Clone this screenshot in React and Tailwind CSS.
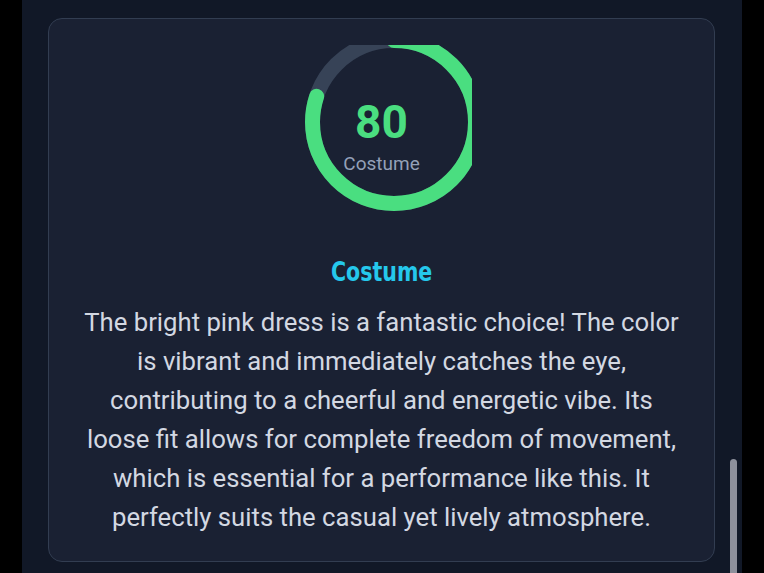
import React from 'react'

const score = 80

function ScoreRing({ value, label }) {
  const r = 81.5
  const circ = 2 * Math.PI * r
  const offset = circ * (1 - value / 100)

  return (
    <div className="relative w-[180px] h-[180px] overflow-hidden flex flex-col items-center justify-center pt-[4px]">
      <svg
        className="absolute inset-0"
        width="180"
        height="180"
        viewBox="0 0 180 180"
      >
        <circle cx="102" cy="77" r={r} fill="none" stroke="#374357" strokeWidth="15" />
        <circle
          cx="102"
          cy="77"
          r={r}
          fill="none"
          stroke="#4ade80"
          strokeWidth="15"
          strokeLinecap="round"
          strokeDasharray={circ}
          strokeDashoffset={offset}
          transform="rotate(-90 102 77)"
        />
      </svg>
      {/* score + label */}
      <span className="relative text-[46px] leading-[48px] font-bold text-[#4ade80] font-['Roboto',sans-serif]">
        {value}
      </span>
      <span className="relative mt-[6px] text-[19px] leading-6 text-[#94a0b8] font-['Roboto',sans-serif]">
        {label}
      </span>
    </div>
  )
}

export default function App() {
  return (
    <main className="min-h-screen bg-black">
      <div className="relative w-[720px] mx-auto h-[573px] overflow-hidden bg-[#111827] pl-[26px] pr-[27px] pt-[18px]">

        <div className="flex flex-col items-center rounded-[14px] border border-[#323d51] bg-[#1a2133] px-8 pt-[26px] pb-[24px]">
          <ScoreRing value={score} label="Costume" />

          <h2 className="mt-[31px] text-[26px] leading-8 font-bold text-[#25c8ec] scale-x-[0.88] font-['DejaVu_Sans_Condensed','DejaVu_Sans',sans-serif]">
            Costume
          </h2>

          <p className="mt-[15px] text-center text-[25.7px] leading-[39px] text-[#d3d8e2] font-['Roboto',sans-serif]">
            The bright pink dress is a fantastic choice! The color is vibrant and immediately catches the eye, contributing to a cheerful and energetic vibe. Its loose fit allows for complete freedom of movement, which is essential for a performance like this. It perfectly suits the casual yet lively atmosphere.
          </p>
        </div>

        {/* Scrollbar thumb */}
        <div className="absolute right-[5px] top-[459px] w-[7px] h-[140px] rounded-full bg-[#8d909b]" />
      </div>
    </main>
  )
}
